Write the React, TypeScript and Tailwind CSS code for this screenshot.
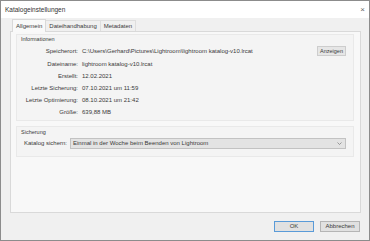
import React from "react";

const font = { fontFamily: '"Liberation Sans", Arial, sans-serif' };

export default function App() {
  return (
    <div
      className="w-[370px] h-[241px] border border-[#8c8c8c] bg-[#f0f0f0] flex flex-col text-[6px] text-[#3a3a3a] overflow-hidden"
      style={font}
    >
      {/* Title bar */}
      <div className="h-[17px] bg-white flex items-center justify-between pl-[4px] pr-[4px] shrink-0">
        <span className="text-[6.5px] text-[#333]">Katalogeinstellungen</span>
        <span className="text-[8px] text-[#666] leading-none">×</span>
      </div>

      {/* Tabs */}
      <div className="mt-[1px] ml-[11px] flex h-[12px] items-end shrink-0">
        <div className="h-[13px] -mb-[1px] px-[3px] flex items-center bg-[#f9f9f9] border border-b-0 border-[#d9d9d9] relative z-10">
          Allgemein
        </div>
        <div className="h-[11px] px-[3px] flex items-center border border-l-0 border-b-0 border-[#dedede] bg-[#f0f0f0]">
          Dateihandhabung
        </div>
        <div className="h-[11px] px-[3px] flex items-center border border-l-0 border-b-0 border-[#dedede] bg-[#f0f0f0]">
          Metadaten
        </div>
      </div>

      {/* Tab panel */}
      <div className="ml-[9px] w-[351px] h-[182px] shrink-0 border border-[#d9d9d9] bg-[#f8f8f8] pl-[5px] pr-[6px] pt-[2px]">
        {/* Informationen */}
        <div className="h-[87px] border border-[#e9e9e9] bg-[#f4f4f4] flex flex-col">
          <div className="h-[9px] pl-[4px] flex items-center text-[5.5px]">Informationen</div>
          <div className="h-[14px] flex items-center">
            <div className="w-[61px] shrink-0 text-right">Speicherort:</div>
            <div className="ml-[4px] flex-1">C:\Users\Gerhard\Pictures\Lightroom\lightroom katalog-v10.lrcat</div>
            <div className="mr-[7px] w-[29px] h-[10px] border border-[#cdcdcd] bg-[#e6e6e6] flex items-center justify-center text-[5.5px]">
              Anzeigen
            </div>
          </div>
          <div className="flex flex-col">
            {[
              ["Dateiname:", "lightroom katalog-v10.lrcat"],
              ["Erstellt:", "12.02.2021"],
              ["Letzte Sicherung:", "07.10.2021 um 11:59"],
              ["Letzte Optimierung:", "08.10.2021 um 21:42"],
              ["Größe:", "639,88 MB"],
            ].map(([l, v]) => (
              <div key={l} className="flex h-[12px] items-center">
                <div className="w-[61px] shrink-0 text-right">{l}</div>
                <div className="ml-[4px] flex-1">{v}</div>
              </div>
            ))}
          </div>
        </div>

        {/* Sicherung */}
        <div className="mt-[5px] h-[31px] border border-[#e9e9e9] bg-[#f4f4f4] flex flex-col">
          <div className="h-[10px] pl-[4px] flex items-center text-[5.5px]">Sicherung</div>
          <div className="h-[13px] flex items-center">
            <div className="w-[50px] shrink-0 text-right">Katalog sichern:</div>
            <div className="ml-[3px] mr-[7px] flex-1 h-[11px] border border-[#c2c2c2] bg-[#e3e3e3] flex items-center justify-between pl-[2px] pr-[3px]">
              <span>Einmal in der Woche beim Beenden von Lightroom</span>
              <svg width="5" height="3" viewBox="0 0 5 3">
                <path d="M0.5 0.5 L2.5 2.5 L4.5 0.5" fill="none" stroke="#777" strokeWidth="0.7" />
              </svg>
            </div>
          </div>
        </div>
      </div>

      {/* Footer */}
      <div className="mt-[8px] h-[11px] flex justify-end gap-[6px] pr-[9px] shrink-0">
        <div className="w-[40px] h-[11px] border border-[#5a9bd8] bg-[#e1e1e1] flex items-center justify-center">OK</div>
        <div className="w-[40px] h-[11px] border border-[#b5b5b5] bg-[#e1e1e1] flex items-center justify-center">Abbrechen</div>
      </div>
    </div>
  );
}
